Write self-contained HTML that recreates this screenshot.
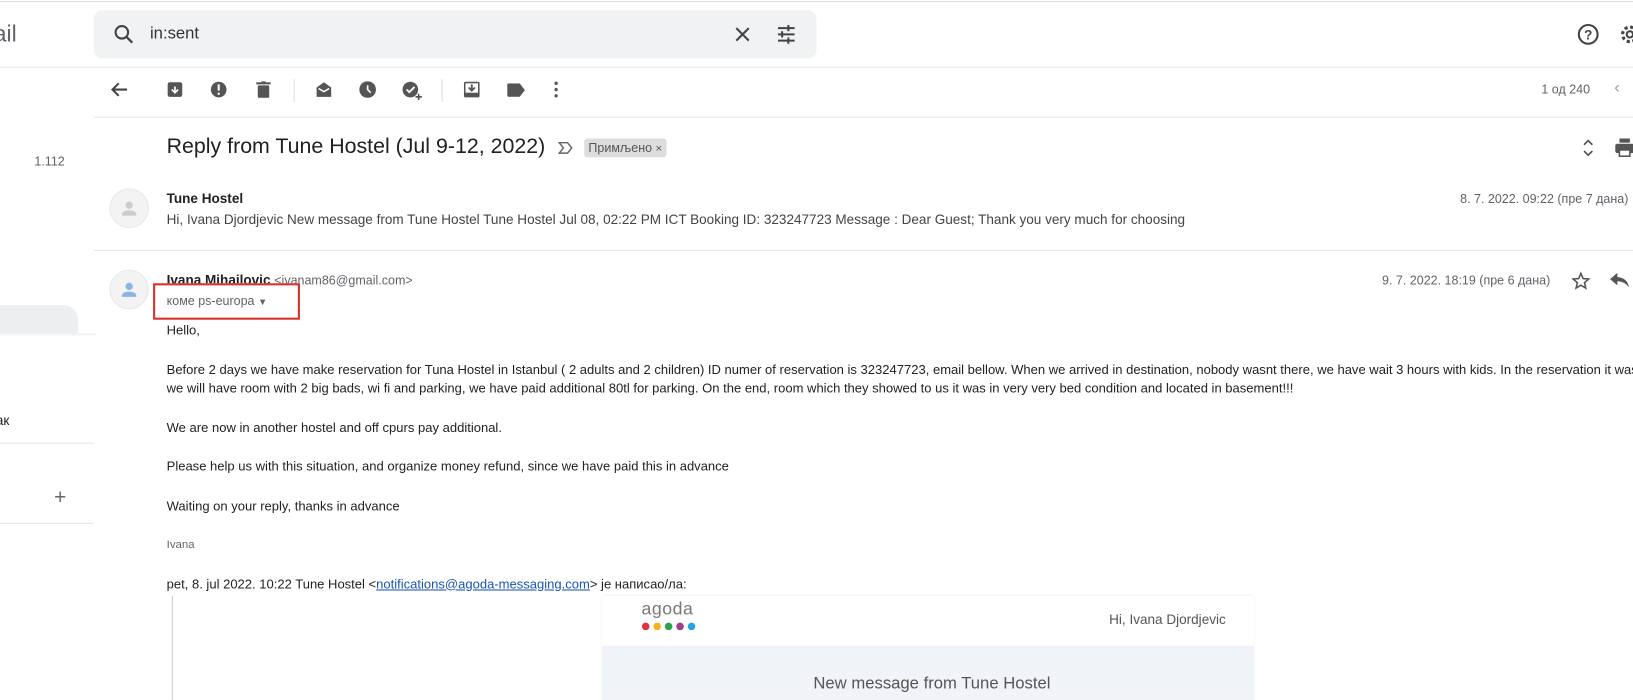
<!DOCTYPE html>
<html><head><meta charset="utf-8"><style>
*{margin:0;padding:0;box-sizing:border-box}
body{width:1633px;height:697px;overflow:hidden;background:#fff;font-family:"Liberation Sans",Arial,sans-serif;color:#222;position:relative}
#w{position:absolute;left:0;top:0;width:1568px;height:670px;transform:scale(1.04145);transform-origin:0 0}
.a{position:absolute;white-space:nowrap}
.ic{position:absolute}
.g{color:#5f6368}
</style></head><body><div id="w">
<div class="a" style="left:0;top:1px;width:1568px;height:1px;background:#ddd"></div>
<div class="a" style="left:-6px;top:20px;font-size:22px;color:#5f6368">ail</div>
<div class="a" style="left:90px;top:10px;width:694px;height:46px;background:#f0f2f4;border-radius:8px"></div>
<svg class="ic" style="left:107px;top:21px" width="24" height="24" viewBox="0 0 24 24"><circle cx="10" cy="10" r="6" fill="none" stroke="#444" stroke-width="2"/><path d="M14.5 14.5 20 20" stroke="#444" stroke-width="2.2"/></svg>
<div class="a" style="left:144px;top:24px;font-size:16px;color:#333">in:sent</div>
<svg class="ic" style="left:703px;top:23px" width="20" height="20" viewBox="0 0 20 20"><path d="M4 4 16 16M16 4 4 16" stroke="#444" stroke-width="2"/></svg>
<svg class="ic" style="left:744px;top:22px" width="22" height="22" viewBox="0 0 22 22"><path d="M3 5h16M3 11h16M3 17h16" stroke="#444" stroke-width="2"/><rect x="12" y="2" width="2" height="6" fill="#444"/><rect x="6" y="8" width="2" height="6" fill="#444"/><rect x="12" y="14" width="2" height="6" fill="#444"/></svg>
<svg class="ic" style="left:1513px;top:21px" width="24" height="24" viewBox="0 0 24 24"><circle cx="12" cy="12" r="9" fill="none" stroke="#444" stroke-width="2"/><text x="12" y="17" font-size="13" text-anchor="middle" fill="#444" font-family="Liberation Sans" font-weight="bold">?</text></svg>
<svg class="ic" style="left:1553px;top:21px" width="24" height="24" viewBox="0 0 24 24"><circle cx="12" cy="12" r="7" fill="none" stroke="#444" stroke-width="3" stroke-dasharray="3 2.5"/><circle cx="12" cy="12" r="3" fill="none" stroke="#444" stroke-width="2"/></svg>
<div class="a" style="left:0;top:64px;width:1568px;height:1px;background:#e6e6e6"></div>
<svg class="ic" style="left:105px;top:76px" width="20" height="20" viewBox="0 0 20 20"><path d="M17 10H4M9 4 3 10l6 6" fill="none" stroke="#444" stroke-width="2"/></svg>
<svg class="ic" style="left:160px;top:78px" width="16" height="16" viewBox="0 0 16 16"><rect x="1" y="1" width="14" height="14" rx="2" fill="#555"/><path d="M5 8l3 3 3-3M8 5v6" stroke="#fff" stroke-width="1.6" fill="none"/></svg>
<svg class="ic" style="left:202px;top:78px" width="16" height="16" viewBox="0 0 16 16"><circle cx="8" cy="8" r="7.5" fill="#555"/><rect x="7" y="3" width="2" height="6" fill="#fff"/><rect x="7" y="11" width="2" height="2" fill="#fff"/></svg>
<svg class="ic" style="left:246px;top:78px" width="14" height="16" viewBox="0 0 14 16"><rect x="0" y="1" width="14" height="2" fill="#555"/><rect x="5" y="0" width="4" height="2" fill="#555"/><rect x="1.5" y="4" width="11" height="12" rx="1" fill="#555"/></svg>
<div class="a" style="left:282px;top:76px;width:1px;height:22px;background:#ddd"></div>
<svg class="ic" style="left:302px;top:77px" width="18" height="18" viewBox="0 0 18 18"><path d="M2 7 9 2l7 5v9H2z" fill="#555"/><path d="M4 8l5 3 5-3" stroke="#fff" stroke-width="1.5" fill="none"/></svg>
<svg class="ic" style="left:345px;top:78px" width="16" height="16" viewBox="0 0 16 16"><circle cx="8" cy="8" r="8" fill="#555"/><path d="M8 4v4l3 3" stroke="#fff" stroke-width="1.6" fill="none"/></svg>
<svg class="ic" style="left:386px;top:77px" width="20" height="20" viewBox="0 0 20 20"><circle cx="8" cy="9" r="7.5" fill="#555"/><path d="M4.5 9l2.5 2.5 5-5" stroke="#fff" stroke-width="1.8" fill="none"/><path d="M16 13v6M13 16h6" stroke="#555" stroke-width="1.6"/></svg>
<div class="a" style="left:424px;top:76px;width:1px;height:22px;background:#ddd"></div>
<svg class="ic" style="left:445px;top:78px" width="16" height="16" viewBox="0 0 16 16"><rect x="0.5" y="0.5" width="15" height="15" rx="1.5" fill="#555"/><rect x="2" y="2" width="12" height="9" fill="#fff"/><path d="M8 3v6M5 6l3 3 3-3" stroke="#555" stroke-width="1.8" fill="none"/></svg>
<svg class="ic" style="left:487px;top:80px" width="18" height="13" viewBox="0 0 18 13"><path d="M0 1.5Q0 0 1.5 0H12l5 6.5-5 6.5H1.5Q0 13 0 11.5z" fill="#555"/></svg>
<svg class="ic" style="left:531px;top:78px" width="6" height="16" viewBox="0 0 6 16"><circle cx="3" cy="2" r="1.6" fill="#555"/><circle cx="3" cy="8" r="1.6" fill="#555"/><circle cx="3" cy="14" r="1.6" fill="#555"/></svg>
<div class="a g" style="left:1480px;top:79px;font-size:12px">1 од 240</div>
<div class="a" style="left:1550px;top:76px;font-size:16px;color:#999">‹</div>
<div class="a" style="left:90px;top:112px;width:1478px;height:1px;background:#e6e6e6"></div>
<div class="a g" style="left:33px;top:148px;font-size:12px">1.112</div>
<div class="a" style="left:0;top:293px;width:75px;height:27px;background:#eceef0;border-radius:0 14px 0 0"></div>
<div class="a" style="left:0;top:320px;width:92px;height:2px;background:#f2f2f2"></div>
<div class="a" style="left:-4px;top:396px;font-size:13px">ак</div>
<div class="a" style="left:0;top:425px;width:90px;height:1px;background:#e3e3e3"></div>
<div class="a" style="left:52px;top:467px;font-size:20px;color:#666">+</div>
<div class="a" style="left:0;top:502px;width:90px;height:1px;background:#e3e3e3"></div>
<div class="a" style="left:160px;top:129px;font-size:20.5px;color:#202124">Reply from Tune Hostel (Jul 9-12, 2022)</div>
<svg class="ic" style="left:535px;top:135px" width="16" height="14" viewBox="0 0 16 14"><path d="M2 2h8l4 5-4 5H2l4-5z" fill="none" stroke="#666" stroke-width="1.4"/></svg>
<div class="a" style="left:561px;top:133px;height:18px;padding:0 4px;background:#ddd;border-radius:3px;font-size:12px;line-height:18px;color:#555">Примљено <span style="font-size:11px">×</span></div>
<svg class="ic" style="left:1517px;top:133px" width="16" height="18" viewBox="0 0 16 18"><path d="M4 6l4-4 4 4M4 12l4 4 4-4" fill="none" stroke="#555" stroke-width="1.6"/></svg>
<svg class="ic" style="left:1550px;top:132px" width="20" height="20" viewBox="0 0 20 20"><rect x="5" y="1" width="10" height="4" fill="#555"/><rect x="1" y="6" width="18" height="9" rx="2" fill="#555"/><rect x="5" y="12" width="10" height="6" fill="#fff" stroke="#555" stroke-width="1.5"/></svg>
<div class="a" style="left:105px;top:181px;width:38px;height:38px;border-radius:50%;background:#f3f3f3;border:1px solid #e8e8e8"></div>
<svg class="ic" style="left:115px;top:191px" width="18" height="18" viewBox="0 0 18 18"><circle cx="9" cy="6" r="3.5" fill="#ccc"/><path d="M2 16q0-5 7-5t7 5z" fill="#ccc"/></svg>
<div class="a" style="left:160px;top:183px;font-size:13px;font-weight:bold;color:#202124">Tune Hostel</div>
<div class="a" style="left:160px;top:203px;font-size:13px;color:#444">Hi, Ivana Djordjevic New message from Tune Hostel Tune Hostel Jul 08, 02:22 PM ICT Booking ID: 323247723 Message : Dear Guest; Thank you very much for choosing</div>
<div class="a g" style="left:1402px;top:184px;font-size:12px">8. 7. 2022. 09:22 (пре 7 дана)</div>
<div class="a" style="left:90px;top:240px;width:1478px;height:1px;background:#e6e6e6"></div>
<div class="a" style="left:105px;top:259px;width:38px;height:38px;border-radius:50%;background:#f3f3f3;border:1px solid #e8e8e8"></div>
<svg class="ic" style="left:115px;top:269px" width="18" height="18" viewBox="0 0 18 18"><circle cx="9" cy="6" r="3.5" fill="#8ab4e8"/><path d="M2 16q0-5 7-5t7 5z" fill="#8ab4e8"/></svg>
<div class="a" style="left:160px;top:261px;font-size:13px;font-weight:bold;color:#202124">Ivana Mihajlovic <span style="font-weight:normal;font-size:12px;color:#5f6368">&lt;ivanam86@gmail.com&gt;</span></div>
<div class="a" style="left:147px;top:272px;width:141px;height:35px;border:2px solid #d9302a;background:#fff"></div>
<div class="a g" style="left:160px;top:282px;font-size:12px">коме ps-europa <span style="font-size:9px">▼</span></div>
<div class="a g" style="left:1327px;top:262px;font-size:12px">9. 7. 2022. 18:19 (пре 6 дана)</div>
<svg class="ic" style="left:1508px;top:260px" width="20" height="20" viewBox="0 0 24 24"><path d="M12 3l2.6 6 6.4.5-4.9 4.2 1.5 6.3L12 16.6 6.4 20l1.5-6.3L3 9.5 9.4 9z" fill="none" stroke="#555" stroke-width="1.8"/></svg>
<svg class="ic" style="left:1546px;top:261px" width="18" height="16" viewBox="0 0 18 16"><path d="M7 1 0 7l7 6V9q7 0 11 6-1-9-11-10z" fill="#555"/></svg>
<div style="position:absolute;left:160px;top:308px;font-size:12.5px;color:#222;line-height:18.5px;white-space:nowrap">
<div>Hello,</div>
<div style="margin-top:19px">Before 2 days we have make reservation for Tuna Hostel in Istanbul ( 2 adults and 2 children) ID numer of reservation is 323247723, email bellow. When we arrived in destination, nobody wasnt there, we have wait 3 hours with kids. In the reservation it was</div>
<div>we will have room with 2 big bads, wi fi and parking, we have paid additional 80tl for parking. On the end, room which they showed to us it was in very very bed condition and located in basement!!!</div>
<div style="margin-top:19px">We are now in another hostel and off cpurs pay additional.</div>
<div style="margin-top:19px">Please help us with this situation, and organize money refund, since we have paid this in advance</div>
<div style="margin-top:19px">Waiting on your reply, thanks in advance</div>
<div style="margin-top:19px;font-size:11px;color:#666">Ivana</div>
<div style="margin-top:19px">pet, 8. jul 2022. 10:22 Tune Hostel &lt;<span style="color:#1a55b0;text-decoration:underline">notifications@agoda-messaging.com</span>&gt; је написао/ла:</div>
</div>
<div class="a" style="left:165px;top:572px;width:1px;height:100px;background:#ccc"></div>
<div class="a" style="left:578px;top:572px;width:626px;height:100px;background:#f0f3f7;box-shadow:0 0 2px #e5e5e5"></div>
<div class="a" style="left:578px;top:572px;width:626px;height:48px;background:#fff"></div>
<div class="a" style="left:616px;top:575px;font-size:17px;color:#777;letter-spacing:0.5px">agoda</div>
<svg class="ic" style="left:616px;top:597px" width="54" height="9" viewBox="0 0 54 9"><circle cx="4" cy="4.5" r="3.6" fill="#e0323c"/><circle cx="15" cy="4.5" r="3.6" fill="#f4b31a"/><circle cx="26" cy="4.5" r="3.6" fill="#2ba24b"/><circle cx="37" cy="4.5" r="3.6" fill="#9b3f8e"/><circle cx="48" cy="4.5" r="3.6" fill="#29a3e0"/></svg>
<div class="a" style="left:1065px;top:587px;font-size:13px;color:#555">Hi, Ivana Djordjevic</div>
<div class="a" style="left:781px;top:648px;font-size:16px;color:#555">New message from Tune Hostel</div>
</div></body></html>
